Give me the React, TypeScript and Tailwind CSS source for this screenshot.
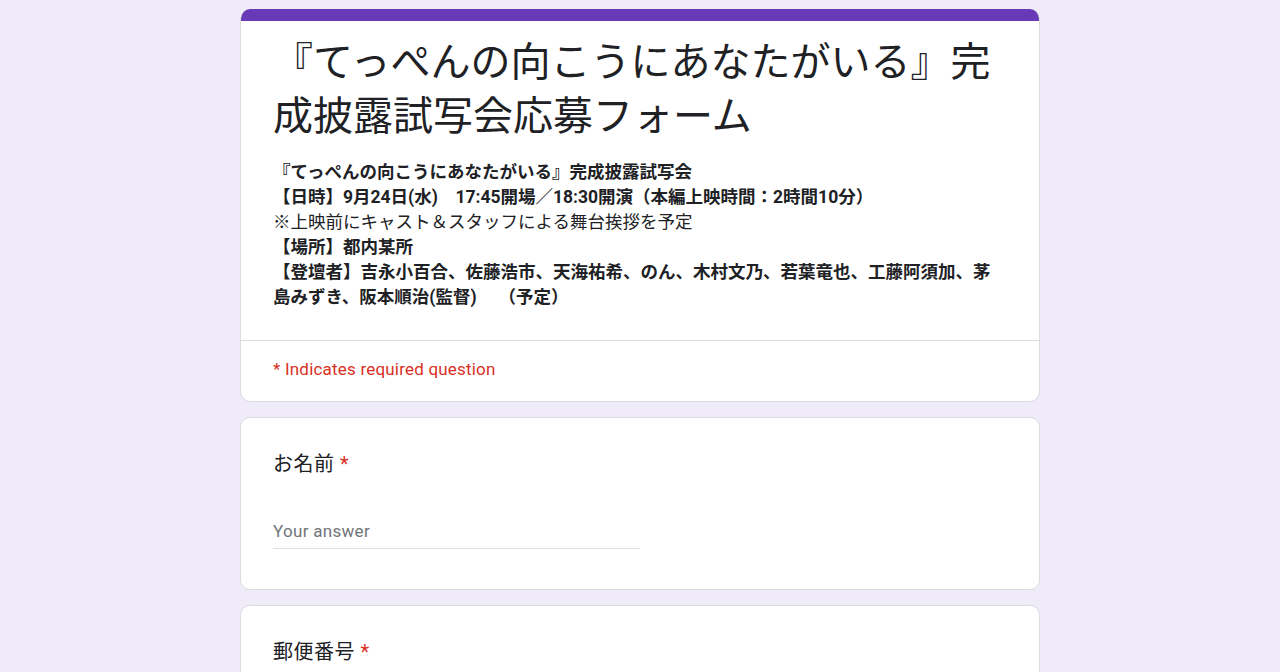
import React from 'react';

const font = { fontFamily: 'Roboto, "Noto Sans CJK JP", sans-serif' };

// 質問カード（テキスト回答）
function QuestionCard({ label }: { label: string }) {
  return (
    <div className="bg-white border border-[#dadce0] rounded-[10px] px-[32px] pt-[31px] pb-[40px]">
      <div className="text-[20px] leading-[30px] text-[#202124] tracking-[0.5px]">
        {label}
        <span className="text-[#d93025]"> *</span>
      </div>
      <div className="mt-[41px] w-1/2 border-b border-[#e0e0e0] pb-[6px]">
        <div className="text-[17px] leading-[22px] text-[#70757a] tracking-[0.3px]">Your answer</div>
      </div>
    </div>
  );
}

export default function App() {
  return (
    <div className="min-h-screen bg-[#f0ebf8] pt-[9px] pb-10" style={font}>
      <div className="w-[800px] mx-auto flex flex-col gap-[15px]">
        {/* ヘッダーカード */}
        <div className="bg-white border border-[#dadce0] border-t-0 rounded-[10px] overflow-hidden">
          <div className="h-[12px] bg-[#673ab7]" />
          <div className="pl-[32px] pr-[33px] pt-[15px] pb-[30px]">
            <h1 className="text-[40px] leading-[54px] text-[#202124] font-normal">
              『てっぺんの向こうにあなたがいる』完成披露試写会応募フォーム
            </h1>
            <div className="mt-[16px] text-[17.5px] leading-[25px] text-[#202124]">
              <div className="font-bold">『てっぺんの向こうにあなたがいる』完成披露試写会</div>
              <div className="font-bold">【日時】9月24日(水)　17:45開場／18:30開演（本編上映時間：2時間10分）</div>
              <div>※上映前にキャスト＆スタッフによる舞台挨拶を予定</div>
              <div className="font-bold">【場所】都内某所</div>
              <div className="font-bold">
                【登壇者】吉永小百合、佐藤浩市、天海祐希、のん、木村文乃、若葉竜也、工藤阿須加、茅島みずき、阪本順治(監督)　 （予定）
              </div>
            </div>
          </div>
          <div className="border-t border-[#dadce0] px-[32px] pt-[17px] pb-[21px]">
            <div className="text-[17px] leading-[22px] text-[#d93025] tracking-[0.2px]">* Indicates required question</div>
          </div>
        </div>

        <QuestionCard label="お名前" />
        <QuestionCard label="郵便番号" />
      </div>
    </div>
  );
}
